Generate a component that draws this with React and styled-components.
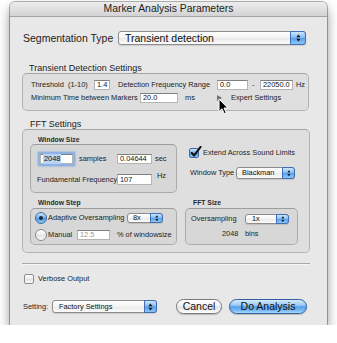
import React from "react";
import styled, { createGlobalStyle } from "styled-components";

const GlobalStyle = createGlobalStyle`
  html, body {
    margin: 0;
    padding: 0;
    background: #ffffff;
  }
  body {
    font-family: "Liberation Sans", Arial, sans-serif;
    color: #1c1c1c;
  }
`;

const Window = styled.div`
  position: relative;
  margin: 2px 0 0 10px;
  width: 317px;
  height: 323px;
  box-sizing: border-box;
  background: #e8e8e8;
  border-radius: 5px 5px 0 0;
  box-shadow: 0 6px 12px rgba(0, 0, 0, 0.45), 0 0 0 1px rgba(0, 0, 0, 0.28);
  display: flex;
  flex-direction: column;
`;

const TitleBar = styled.div`
  height: 14px;
  border-radius: 5px 5px 0 0;
  background: linear-gradient(#ededed, #d3d3d3);
  border-bottom: 1px solid #a3a3a3;
  font-size: 10.4px;
  line-height: 14px;
  text-align: center;
  color: #222;
`;

const Body = styled.div`
  padding: 14px 18px 0 12px;
  display: flex;
  flex-direction: column;
`;

const Row = styled.div`
  display: flex;
  align-items: center;
  height: ${({ $h }) => $h || 10}px;
  margin-top: ${({ $mt }) => $mt || 0}px;
  margin-left: ${({ $ml }) => $ml || 0}px;
`;

const Label = styled.span`
  display: inline-block;
  flex: none;
  font-size: ${({ $size }) => $size || 7.4}px;
  font-weight: ${({ $bold }) => ($bold ? "bold" : "normal")};
  width: ${({ $w }) => ($w ? `${$w}px` : "auto")};
  margin-left: ${({ $ml }) => $ml || 0}px;
  color: ${({ $dim }) => ($dim ? "#8a8a8a" : "#1c1c1c")};
  white-space: nowrap;
  line-height: 1;
  text-align: ${({ $right }) => ($right ? "right" : "left")};
`;

const SectionTitle = styled.div`
  font-size: 9px;
  line-height: 10px;
  height: 10px;
  color: #1c1c1c;
  margin-top: ${({ $mt }) => $mt}px;
  padding-left: ${({ $pl }) => $pl}px;
`;

const SubTitle = styled.div`
  font-size: 6.8px;
  font-weight: bold;
  line-height: 9px;
  height: 9px;
  color: #2a2a2a;
  padding-left: ${({ $pl }) => $pl || 0}px;
  margin-bottom: ${({ $mb }) => $mb || 0}px;
`;

const GroupBox = styled.div`
  box-sizing: border-box;
  width: ${({ $w }) => $w}px;
  height: ${({ $h }) => ($h ? `${$h}px` : "auto")};
  border: 1px solid rgba(0, 0, 0, 0.2);
  border-top-color: rgba(0, 0, 0, 0.27);
  border-radius: 5px;
  background: rgba(0, 0, 0, 0.035);
  padding-top: ${({ $pt }) => $pt || 0}px;
  display: flex;
  flex-direction: column;
`;

const Field = styled.div`
  box-sizing: border-box;
  flex: none;
  width: ${({ $w }) => $w}px;
  height: ${({ $h }) => $h || 10}px;
  margin-left: ${({ $ml }) => $ml || 0}px;
  background: #fff;
  border: 1px solid #b4b4b4;
  border-top-color: #7e7e7e;
  font-size: 7.4px;
  line-height: 1;
  padding-left: 2px;
  display: flex;
  align-items: center;
  color: ${({ $dim }) => ($dim ? "#9a9a9a" : "#111")};
  box-shadow: ${({ $focus }) =>
    $focus ? "0 0 0 1px #8fb3e6, 0 0 2px 2px #6c9ee0" : "none"};
`;

const Selected = styled.span`
  background: #b7d3f6;
  padding: 1px 1px;
`;

const PopupBox = styled.div`
  box-sizing: border-box;
  flex: none;
  position: relative;
  width: ${({ $w }) => $w}px;
  height: ${({ $h }) => $h}px;
  margin-left: ${({ $ml }) => $ml || 0}px;
  border: 1px solid #8c8c8c;
  border-radius: 3px;
  background: linear-gradient(#ffffff, #f3f3f3 50%, #e9e9e9 51%, #fbfbfb);
  display: flex;
  align-items: center;
  font-size: ${({ $fs }) => $fs}px;
  line-height: 1;
  color: #111;
  box-shadow: 0 1px 1px rgba(0, 0, 0, 0.12);
`;

const PopupText = styled.span`
  flex: 1;
  padding-left: ${({ $pl }) => $pl}px;
  white-space: nowrap;
`;

const Stepper = styled.div`
  align-self: stretch;
  width: ${({ $w }) => $w}px;
  margin: -1px -1px -1px 0;
  border-radius: 0 3px 3px 0;
  border: 1px solid #3f6fb5;
  background: linear-gradient(#cfe6fb, #87bdf1 45%, #5a9de8 52%, #8cc8f7);
  display: flex;
  align-items: center;
  justify-content: center;
`;

const Check = styled.div`
  box-sizing: border-box;
  flex: none;
  position: relative;
  width: 10px;
  height: 10px;
  margin-left: ${({ $ml }) => $ml || 0}px;
  border-radius: 2px;
  border: 1px solid ${({ $on }) => ($on ? "#3d69a8" : "#8c8c8c")};
  background: ${({ $on }) =>
    $on
      ? "linear-gradient(#cde4fa, #7fb6ee 45%, #4f93e3 52%, #8ccaf7)"
      : "linear-gradient(#ffffff, #ececec 50%, #e2e2e2 51%, #fafafa)"};
  & svg {
    position: absolute;
    left: 0;
    top: -3px;
  }
`;

const Radio = styled.div`
  box-sizing: border-box;
  flex: none;
  width: 12px;
  height: 12px;
  margin-left: ${({ $ml }) => $ml || 0}px;
  border-radius: 50%;
  border: 1px solid ${({ $on }) => ($on ? "#3d69a8" : "#8a8a8a")};
  background: ${({ $on }) =>
    $on
      ? "linear-gradient(#cde4fa, #7fb6ee 45%, #4f93e3 52%, #8ccaf7)"
      : "linear-gradient(#ffffff, #ededed 50%, #e2e2e2 51%, #fbfbfb)"};
  display: flex;
  align-items: center;
  justify-content: center;
  &::after {
    content: "";
    display: ${({ $on }) => ($on ? "block" : "none")};
    width: 4px;
    height: 4px;
    border-radius: 50%;
    background: #1d2b3e;
  }
`;

const Disclosure = styled.div`
  flex: none;
  width: 0;
  height: 0;
  border-top: 3.5px solid transparent;
  border-bottom: 3.5px solid transparent;
  border-left: 5px solid #707070;
`;

const FftGrid = styled.div`
  display: grid;
  grid-template-columns: 147px 113px;
  column-gap: 8px;
  row-gap: 5px;
  padding: 5px 0 7px 7px;
`;

const Cell = styled.div`
  display: flex;
  flex-direction: column;
`;

const Separator = styled.div`
  height: 1px;
  width: 288px;
  margin-top: 10px;
  background: #a9a9a9;
  box-shadow: 0 1px 0 #f6f6f6;
`;

const PillButton = styled.div`
  box-sizing: border-box;
  flex: none;
  width: ${({ $w }) => $w}px;
  height: 15px;
  margin-left: ${({ $ml }) => $ml || 0}px;
  border-radius: 8px;
  border: 1px solid ${({ $primary }) => ($primary ? "#2f5f9e" : "#7a7a7a")};
  background: ${({ $primary }) =>
    $primary
      ? "linear-gradient(#d6eafc, #9ccaf4 40%, #5aa0ea 52%, #76b9f4 80%, #a8dafd)"
      : "linear-gradient(#ffffff, #f4f4f4 45%, #e3e3e3 52%, #f2f2f2 80%, #ffffff)"};
  font-size: 10.5px;
  line-height: 13px;
  text-align: center;
  color: #111;
  box-shadow: 0 1px 1px rgba(0, 0, 0, 0.2);
`;

const Cursor = styled.svg`
  position: absolute;
  left: 208px;
  top: 96px;
`;

const Arrows = ({ size = 7 }) => (
  <svg width={size * 0.6} height={size} viewBox="0 0 6 10">
    <path d="M3 0.5 L5.6 4 L0.4 4 Z" fill="#141a24" />
    <path d="M3 9.5 L5.6 6 L0.4 6 Z" fill="#141a24" />
  </svg>
);

const Popup = ({ w, h, fs = 7.4, pl = 5, sw = 11, children, ml }) => (
  <PopupBox $w={w} $h={h} $fs={fs} $ml={ml}>
    <PopupText $pl={pl}>{children}</PopupText>
    <Stepper $w={sw}>
      <Arrows size={h > 12 ? 8 : 6.5} />
    </Stepper>
  </PopupBox>
);

const CheckMark = () => (
  <svg width="12" height="12" viewBox="0 0 12 12">
    <path
      d="M1.8 6.8 L4 9.6 L10.6 0.8"
      fill="none"
      stroke="#111"
      strokeWidth="2"
      strokeLinecap="round"
      strokeLinejoin="round"
    />
  </svg>
);

const App = () => {
  return (
    <>
      <GlobalStyle />
      <Window>
        <TitleBar>Marker Analysis Parameters</TitleBar>
        <Body>
          <Row $h={14}>
            <Label $size={10.5} $w={95} $ml={1}>
              Segmentation Type
            </Label>
            <Popup w={188} h={14} fs={10.5} pl={6} sw={14}>
              Transient detection
            </Popup>
          </Row>

          <SectionTitle $mt={18} $pl={7}>
            Transient Detection Settings
          </SectionTitle>
          <GroupBox $w={287} $h={38} $pt={6}>
            <Row $h={10}>
              <Label $ml={8} $w={63}>
                Threshold{"\u00a0"} (1-10)
              </Label>
              <Field $w={16}>1.4</Field>
              <Label $ml={8} $w={99}>
                Detection Frequency Range
              </Label>
              <Field $w={31}>0.0</Field>
              <Label $ml={4} $w={8}>
                -
              </Label>
              <Field $w={33}>22050.0</Field>
              <Label $ml={3}>Hz</Label>
            </Row>
            <Row $h={10} $mt={3}>
              <Label $ml={8} $w={109}>
                Minimum Time between Markers
              </Label>
              <Field $w={38}>20.0</Field>
              <Label $ml={7} $w={32}>
                ms
              </Label>
              <Disclosure />
              <Label $ml={9}>Expert Settings</Label>
            </Row>
          </GroupBox>

          <SectionTitle $mt={8} $pl={8}>
            FFT Settings
          </SectionTitle>
          <GroupBox $w={288}>
            <FftGrid>
              <Cell>
                <SubTitle $pl={8}>Window Size</SubTitle>
                <GroupBox $w={147} $h={49} $pt={9}>
                  <Row $h={10}>
                    <Field $w={33} $ml={9} $focus>
                      <Selected>2048</Selected>
                    </Field>
                    <Label $ml={6} $w={38}>
                      samples
                    </Label>
                    <Field $w={35}>0.04644</Field>
                    <Label $ml={3}>sec</Label>
                  </Row>
                  <Row $h={11} $mt={10}>
                    <Label $ml={6} $w={80}>
                      Fundamental Frequency
                    </Label>
                    <Field $w={35} $h={11}>
                      107
                    </Field>
                    <Label $ml={5} style={{ alignSelf: "flex-start", marginTop: -2 }}>
                      Hz
                    </Label>
                  </Row>
                </GroupBox>
              </Cell>

              <Cell>
                <Row $h={10} $mt={13} $ml={4}>
                  <Check $on>
                    <CheckMark />
                  </Check>
                  <Label $ml={4}>Extend Across Sound Limits</Label>
                </Row>
                <Row $h={12} $mt={9}>
                  <Label $ml={5} $w={46}>
                    Window Type
                  </Label>
                  <Popup w={59} h={12} pl={5} sw={11}>
                    Blackman
                  </Popup>
                </Row>
              </Cell>

              <Cell>
                <SubTitle $pl={8} $mb={1}>
                  Window Step
                </SubTitle>
                <GroupBox $w={147} $h={37} $pt={3}>
                  <Row $h={12}>
                    <Radio $on $ml={4} />
                    <Label $ml={1} $w={79}>
                      Adaptive Oversampling
                    </Label>
                    <Popup w={36} h={10} pl={5} sw={11}>
                      8x
                    </Popup>
                  </Row>
                  <Row $h={12} $mt={5}>
                    <Radio $ml={4} />
                    <Label $ml={1} $w={29}>
                      Manual
                    </Label>
                    <Field $w={33} $dim>
                      12.5
                    </Field>
                    <Label $ml={7}>% of windowsize</Label>
                  </Row>
                </GroupBox>
              </Cell>

              <Cell>
                <SubTitle $pl={8} $mb={1}>
                  FFT Size
                </SubTitle>
                <GroupBox $w={113} $h={37} $pt={5}>
                  <Row $h={10}>
                    <Label $ml={5} $w={54}>
                      Oversampling
                    </Label>
                    <Popup w={44} h={10} pl={6} sw={11}>
                      1x
                    </Popup>
                  </Row>
                  <Row $h={8} $mt={6}>
                    <Label $ml={36} $w={23}>
                      2048
                    </Label>
                    <Label>bins</Label>
                  </Row>
                </GroupBox>
              </Cell>
            </FftGrid>
          </GroupBox>

          <Separator />

          <Row $h={10} $mt={10} $ml={2}>
            <Check />
            <Label $ml={4}>Verbose Output</Label>
          </Row>

          <Row $h={15} $mt={15}>
            <Label $ml={1} $w={29}>
              Setting:
            </Label>
            <Popup w={105} h={13} pl={6} sw={11}>
              Factory Settings
            </Popup>
            <PillButton $w={46} $ml={19}>
              Cancel
            </PillButton>
            <PillButton $w={78} $ml={7} $primary>
              Do Analysis
            </PillButton>
          </Row>
        </Body>

        <Cursor width="11" height="17" viewBox="0 0 11 17">
          <path
            d="M1 1 L1 13.5 L4 10.8 L6.2 15.6 L8.2 14.7 L6 10 L9.8 10 Z"
            fill="#000"
            stroke="#fff"
            strokeWidth="1"
            strokeLinejoin="round"
          />
        </Cursor>
      </Window>
    </>
  );
};

export default App;
